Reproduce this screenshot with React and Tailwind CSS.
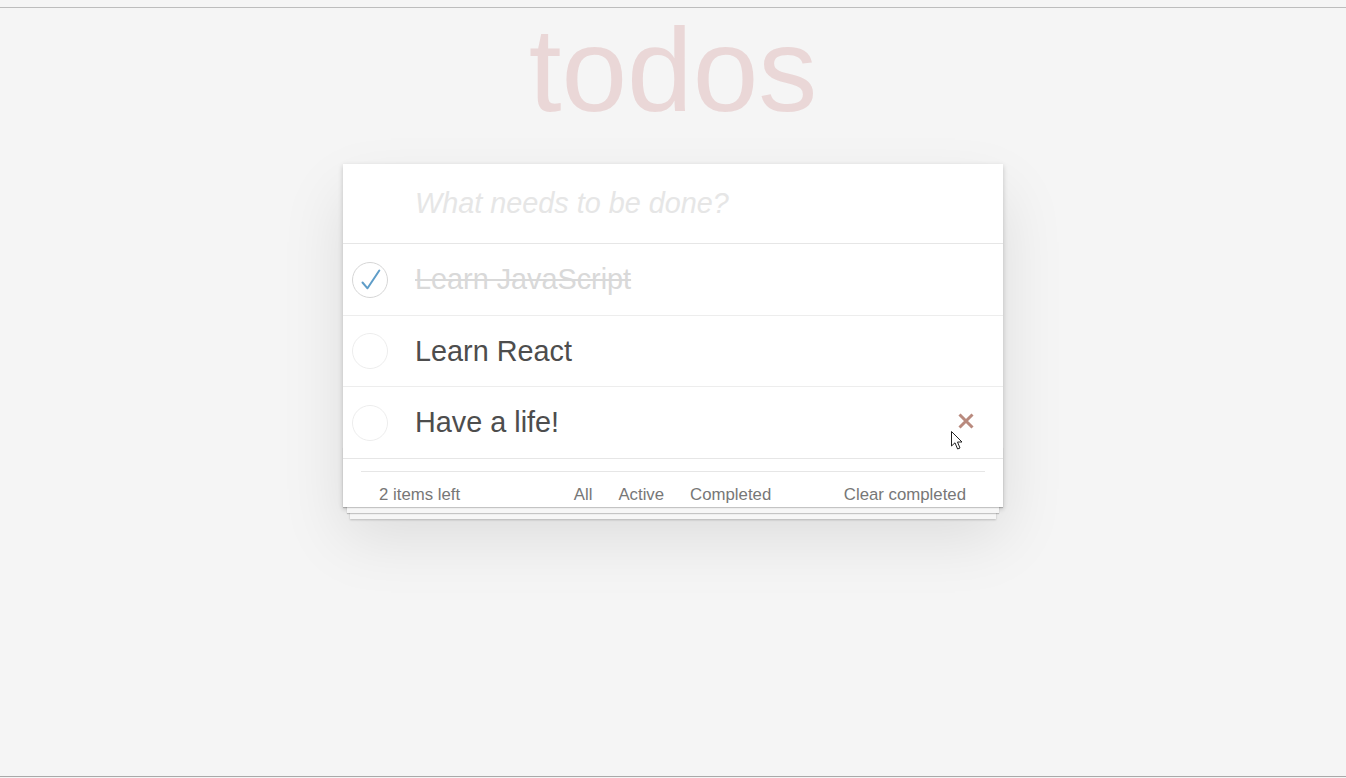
const todos = [
  { text: "Learn JavaScript", done: true, h: "h-[72px]" },
  { text: "Learn React", done: false, h: "h-[71px]" },
  { text: "Have a life!", done: false, h: "h-[71px]", hover: true },
];

function Toggle({ done }) {
  return (
    <svg width="36" height="36" viewBox="0 0 36 36" className="shrink-0">
      <circle cx="18" cy="18" r="17.5" fill="none" stroke={done ? "#d6d6d6" : "#ededed"} strokeWidth="1" />
      {done && (
        <path d="M10.5 20.5 L15.5 26.3 L27.3 8.5" fill="none" stroke="#5f9dc8" strokeWidth="2" strokeLinecap="round" strokeLinejoin="round" />
      )}
    </svg>
  );
}

function TodoRow({ item, last }) {
  return (
    <li className={`relative flex items-center ${item.h} ${last ? "" : "border-b border-[#ededed]"}`}>
      <div className="w-[72px] pl-[9px] flex items-center">
        <Toggle done={item.done} />
      </div>
      <span
        className={`text-[28.8px] leading-[1.2] ${
          item.done ? "text-[#d9d9d9] line-through" : "text-[#4d4d4d]"
        }`}
      >
        {item.text}
      </span>
      {item.hover && (
        <>
          <svg width="18" height="18" viewBox="0 0 18 18" className="ml-auto mr-[28px] -mt-[3px]">
            <path d="M2.5 2.5 L15.5 15.5 M15.5 2.5 L2.5 15.5" stroke="#b98a7e" strokeWidth="3" />
          </svg>
          <svg width="13" height="20" viewBox="0 0 13 20" className="absolute left-[608px] top-[44px]">
            <path d="M0.5 0.5 L0.5 15 L4 11.8 L6.6 18 L9 17 L6.5 11 L11 11 Z" fill="#fff" stroke="#222" strokeWidth="1" strokeLinejoin="round" />
          </svg>
        </>
      )}
    </li>
  );
}

export default function App() {
  return (
    <div className="h-[778px] bg-[#f5f5f5] font-['Liberation_Sans',Arial,sans-serif] overflow-hidden">
      <div className="mt-[7px] h-[770px] border-t border-b border-[#bdbdbd] border-b-[#a9a9a9]">
        <h1 className="mt-[3px] text-center text-[118px] leading-none text-[rgba(175,47,47,0.15)]">
          todos
        </h1>

        <div className="relative mx-auto mt-[35px] w-[660px] bg-white shadow-[0_2px_5px_rgba(0,0,0,0.2),0_30px_60px_rgba(0,0,0,0.1)]">
          <div className="flex h-[80px] items-center border-b border-[#e6e6e6] pl-[72px]">
            <span className="text-[28.8px] italic text-[#e6e6e6]">What needs to be done?</span>
          </div>

          <ul>
            {todos.map((t, i) => (
              <TodoRow key={t.text} item={t} last={i === todos.length - 1} />
            ))}
          </ul>

          <footer className="relative border-t border-[#e6e6e6] text-[16.8px] text-[#777]">
            <div className="pointer-events-none absolute bottom-0 left-0 right-0 h-[60px] shadow-[0_1px_1px_rgba(0,0,0,0.2),0_10px_0_-4px_#f6f6f6,0_11px_1px_-4px_rgba(0,0,0,0.2),0_19px_0_-7px_#f6f6f6,0_20px_2px_-7px_rgba(0,0,0,0.2)]"></div>
            <div className="mx-[18px] mt-[12px] h-px bg-[#e6e6e6]"></div>
            <div className="grid grid-cols-[1fr_auto_1fr] items-center pl-[36px] pr-[37px] pt-[12px] pb-[1px] leading-[20px]">
              <span>2 items left</span>
              <ul className="flex">
                {["All", "Active", "Completed"].map((f) => (
                  <li key={f} className="mx-[4px] border border-transparent px-[8px]">
                    {f}
                  </li>
                ))}
              </ul>
              <span className="justify-self-end">Clear completed</span>
            </div>
          </footer>
        </div>
      </div>
    </div>
  );
}
